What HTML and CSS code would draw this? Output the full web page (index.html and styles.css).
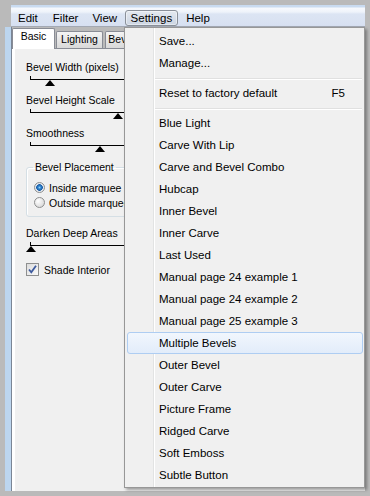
FILE: index.html
```html
<!DOCTYPE html>
<html>
<head>
<title>Bevel Settings</title>
<meta charset="UTF-8">
<link rel="stylesheet" href="styles.css">
</head>
<body>
  <div class="screen">
    <div class="strip"></div>
    <div class="app">
      <div class="menubar">
        <span class="menu-title">Edit</span>
        <span class="menu-title">Filter</span>
        <span class="menu-title">View</span>
        <span class="menu-title open">Settings</span>
        <span class="menu-title">Help</span>
      </div>
      <div class="body">
        <div class="tabs">
          <span class="tab active">Basic</span>
          <span class="tab lighting">Lighting</span>
          <span class="tab bevel">Bevel</span>
        </div>
        <div class="page">
          <div class="slider">
            <div class="slider-label">Bevel Width (pixels)</div>
            <div class="track"><div class="line"></div><span class="thumb" style="left: 19px"></span></div>
          </div>
          <div class="slider">
            <div class="slider-label">Bevel Height Scale</div>
            <div class="track"><div class="line"></div><span class="thumb" style="left: 87px"></span></div>
          </div>
          <div class="slider">
            <div class="slider-label">Smoothness</div>
            <div class="track"><div class="line"></div><span class="thumb" style="left: 69px"></span></div>
          </div>

          <fieldset class="group">
            <legend>Bevel Placement</legend>
            <div class="radio-row"><span class="radio checked"></span>Inside marquee</div>
            <div class="radio-row"><span class="radio"></span>Outside marquee</div>
          </fieldset>

          <div class="slider darken">
            <div class="slider-label">Darken Deep Areas</div>
            <div class="track"><div class="line"></div><span class="thumb" style="left: 0px"></span></div>
          </div>

          <div class="check-row">
            <span class="checkbox">
              <svg width="11" height="11" viewBox="0 0 11 11"><path d="M2 5.5 L4.3 8.3 L9 1.8" fill="none" stroke="#3d5a9e" stroke-width="1.8"/></svg>
            </span>
            Shade Interior
          </div>
        </div>
      </div>
    </div>

    <!-- menu aberto sobre a janela -->
    <div class="dropdown">
      <div class="item">Save...</div>
      <div class="item">Manage...</div>
      <div class="separator"></div>
      <div class="item">Reset to factory default<span class="shortcut">F5</span></div>
      <div class="separator"></div>
      <div class="item">Blue Light</div>
      <div class="item">Carve With Lip</div>
      <div class="item">Carve and Bevel Combo</div>
      <div class="item">Hubcap</div>
      <div class="item">Inner Bevel</div>
      <div class="item">Inner Carve</div>
      <div class="item">Last Used</div>
      <div class="item">Manual page 24 example 1</div>
      <div class="item">Manual page 24 example 2</div>
      <div class="item">Manual page 25 example 3</div>
      <div class="item hover">Multiple Bevels</div>
      <div class="item">Outer Bevel</div>
      <div class="item">Outer Carve</div>
      <div class="item">Picture Frame</div>
      <div class="item">Ridged Carve</div>
      <div class="item">Soft Emboss</div>
      <div class="item">Subtle Button</div>
    </div>
  </div>
</body>
</html>
```

FILE: styles.css
```css
body {
  margin: 0;
  font-family: "Liberation Sans", Arial, sans-serif;
  color: #000;
}
.screen {
  position: relative;
  width: 370px;
  height: 496px;
  box-sizing: border-box;
  padding: 5px;
  background-color: #bababa;
  display: flex;
  overflow: hidden;
}
.strip {
  width: 6px;
  margin-top: 22px;
  background-color: #bcd5ee;
}
.app {
  flex: 1;
  display: flex;
  flex-direction: column;
}

/* Barra de menus */
.menubar {
  height: 21px;
  border-bottom: 1px solid #a3a9b4;
  background: linear-gradient(#c9dbf0 0, #c9dbf0 2px, #f7f9fd 3px, #eef3fa 7px, #dce5f3 9px, #d7e0f1 100%);
  display: flex;
  align-items: flex-end;
  font-size: 11.5px;
}
.menu-title {
  padding: 0 7px;
  line-height: 16px;
}
.menu-title:first-child {
  padding-right: 8px;
}
.menu-title.open {
  padding: 0 5px;
  margin: 0 1px 0 0.5px;
  line-height: 14px;
  border: 1px solid #8a9099;
  border-radius: 3px;
  background: linear-gradient(#e4e9f0, #ccd5e2);
  box-shadow: inset 0 0 0 1px rgba(255, 255, 255, 0.45);
}

/* Abas */
.body {
  flex: 1;
  display: flex;
  flex-direction: column;
  border-left: 1px solid #7a8595;
}
.tabs {
  height: 21px;
  display: flex;
  align-items: flex-end;
  font-size: 10.5px;
}
.tab {
  box-sizing: border-box;
  height: 17px;
  line-height: 14px;
  text-align: center;
  border: 1px solid #898c95;
  border-bottom: none;
  border-radius: 2px 2px 0 0;
  background: linear-gradient(#f4f4f4, #e6e6e6 50%, #d9d9d9);
  overflow: hidden;
}
.tab.active {
  width: 43px;
  height: 21px;
  line-height: 15px;
  margin-bottom: -1px;
  background: #fff;
  position: relative;
  z-index: 1;
}
.tab.lighting {
  width: 47px;
  margin-left: 1px;
}
.tab.bevel {
  width: 33px;
  margin-left: 2px;
}
.page {
  flex: 1;
  background-color: #f0f0f0;
  border-top: 1px solid #898c95;
  border-left: 3px solid #fff;
  padding: 12px 0 0 11px;
  font-size: 10.5px;
}

/* Sliders */
.slider-label {
  line-height: 13px;
  height: 13px;
  white-space: nowrap;
}
.track {
  position: relative;
  height: 20px;
  box-sizing: border-box;
  padding: 2px 0 0 4px;
}
.line {
  height: 3px;
  border-left: 1px solid #000;
  border-bottom: 1px solid #000;
}
.thumb {
  position: absolute;
  top: 6px;
  width: 0;
  height: 0;
  border-left: 5.5px solid transparent;
  border-right: 5.5px solid transparent;
  border-bottom: 6px solid #000;
}

/* Grupo Bevel Placement */
.group {
  width: 150px;
  margin: 1px 0 0 0;
  padding: 6px 8px 6px 7px;
  border: 1px solid #d5dfe5;
  border-radius: 3px;
  box-shadow: inset 1px 1px 0 #fff;
}
.group legend {
  padding: 0 2px;
  margin-left: -1px;
  line-height: 13px;
}
.radio-row {
  display: flex;
  align-items: center;
  gap: 4px;
  height: 15px;
  white-space: nowrap;
}
.radio {
  width: 9px;
  height: 9px;
  border: 1px solid #8e8f8f;
  border-radius: 50%;
  background: radial-gradient(circle at 35% 35%, #fff 0, #ececec 40%, #cfcfcf 100%);
  flex: none;
}
.radio.checked {
  background: radial-gradient(circle, #8fd0f8 0, #2f85d0 1.5px, #1a5aa3 3px, #dfe6ee 3.6px, #fdfdfd 100%);
}
.darken {
  margin-top: 10px;
}

/* Checkbox */
.check-row {
  display: flex;
  align-items: center;
  gap: 5px;
  height: 13px;
  margin-top: 3px;
}
.checkbox {
  width: 11px;
  height: 11px;
  border: 1px solid #8e8f8f;
  background: linear-gradient(135deg, #dcdcdc, #fafafa);
  display: flex;
  align-items: center;
  justify-content: center;
}

/* Menu Settings aberto */
.dropdown {
  position: absolute;
  top: 27px;
  left: 124px;
  width: 241px;
  height: 461px;
  box-sizing: border-box;
  padding-top: 2px;
  border: 1px solid #979797;
  background: linear-gradient(to right, transparent 28px, #e2e3e3 28px, #e2e3e3 29px, #fff 29px, #fff 30px, transparent 30px), #f0f0f0;
  box-shadow: 2px 2px 3px rgba(0, 0, 0, 0.35);
  font-size: 11.5px;
  z-index: 10;
}
.item {
  height: 20px;
  line-height: 20px;
  margin: 0 1px 0 2px;
  padding: 0 17px 0 31px;
  border: 1px solid transparent;
  border-radius: 3px;
  display: flex;
  justify-content: space-between;
  white-space: nowrap;
}
.item.hover {
  border-color: #aecdf2;
  background: linear-gradient(#f1f6fd, #e2ecfa);
}
.separator {
  height: 0;
  margin: 4px 2px 2px 30px;
  border-top: 1px solid #e0e0e0;
  border-bottom: 1px solid #fff;
}
```
